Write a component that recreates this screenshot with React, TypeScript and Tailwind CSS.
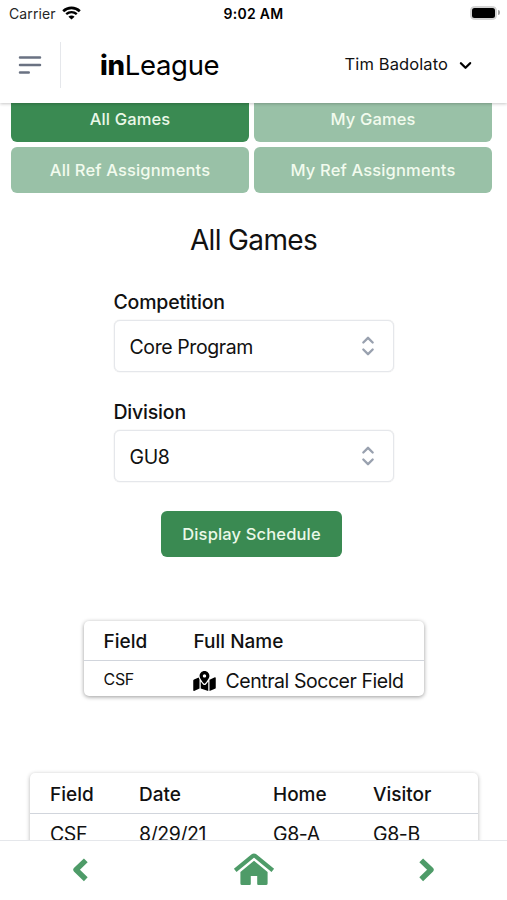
import { useState } from 'react'
import { FaMapMarkedAlt } from 'react-icons/fa'
import { HiChevronDown, HiOutlineMenuAlt2, HiOutlineSelector } from 'react-icons/hi'

const tabs = ['All Games', 'My Games', 'All Ref Assignments', 'My Ref Assignments']

function StatusBar() {
  return (
    <div className="grid h-[27px] grid-cols-3 items-center pl-[9px] pr-[7px] text-black">
      <div className="flex items-center gap-[6px] text-[14px] leading-none tracking-[0.1px] text-neutral-800">
        Carrier
        <svg className="-mt-[2px]" width="19" height="14" viewBox="0 0 19 14" fill="none">
          <path d="M1.2 5.2C5.9.8 13.1.8 17.8 5.2" stroke="#000" strokeWidth="2.7" />
          <path d="M4.2 8.2C7.3 5.5 11.7 5.5 14.8 8.2" stroke="#000" strokeWidth="2.4" />
          <path d="M9.5 13.6 6.4 10.7C8.2 9.2 10.8 9.2 12.6 10.7Z" fill="#000" />
        </svg>
      </div>
      <div className="-ml-[2px] text-center text-[14px] font-semibold leading-none tracking-[0.3px] whitespace-nowrap">9:02 AM</div>
      <div className="-mt-[2px] flex items-center justify-end gap-px">
        <div className="h-[14px] w-[27px] rounded-[4.5px] border border-neutral-300 bg-neutral-300 p-px">
          <div className="h-full w-full rounded-[2.5px] bg-black" />
        </div>
        <div className="h-[5px] w-[2px] rounded-r-full bg-neutral-400" />
      </div>
    </div>
  )
}

function Select({ label, value }: { label: string; value: string }) {
  return (
    <div className="w-[280px]">
      <div className="pt-px text-[19.5px] font-medium leading-6 tracking-[-0.2px]">{label}</div>
      <button className="mt-[6px] flex h-[52px] w-full items-center justify-between rounded-md border-[1.5px] border-gray-200 pl-[15px] pr-[11px] text-[19.5px] tracking-[-0.4px] shadow-[0_0_1px_rgba(0,0,0,0.25)]">
        <span className="pt-[3px]">{value}</span>
        <HiOutlineSelector className="h-[28px] w-[28px] text-gray-400" />
      </button>
    </div>
  )
}

function HomeIcon() {
  return (
    <svg width="42" height="34" viewBox="0 0 42 34" fill="currentColor">
      <path d="M2.2 18.4 19.6 4.2Q21 3.1 22.4 4.2L39.8 18.4" fill="none" stroke="currentColor" strokeWidth="4.1" strokeLinejoin="round" />
      <path d="M21 8.7 34.6 19.9V31.4Q34.6 33 33 33H25.3Q24.2 33 24.2 31.9V24H17.8V31.9Q17.8 33 16.7 33H9Q7.4 33 7.4 31.4V19.9Z" />
    </svg>
  )
}

export default function App() {
  const [activeTab, setActiveTab] = useState('All Games')

  return (
    <div className="flex h-[900px] w-[507px] flex-col overflow-hidden bg-white font-['Inter',sans-serif] text-[#111]">
      {/* Header */}
      <header className="relative z-10 h-[103px] shrink-0 bg-white shadow-[0_1px_3px_rgba(0,0,0,0.22)]">
        <StatusBar />
        <div className="flex h-[76px] items-center">
          <button className="flex h-[46px] w-[61px] items-center border-r border-gray-200 pl-[15px]">
            <HiOutlineMenuAlt2 className="h-[30px] w-[30px] text-gray-500" />
          </button>
          <div className="ml-[39px] pt-[2px] text-[27.5px] leading-none tracking-[-0.3px] text-black">
            <span className="font-extrabold">in</span>League
          </div>
          <button className="ml-auto mr-[30px] flex items-center gap-[6px] text-[16.5px] tracking-[0.1px]">
            <span className="-mt-[2px]">Tim Badolato</span>
            <HiChevronDown className="h-[23px] w-[23px] text-black" />
          </button>
        </div>
      </header>

      {/* Content */}
      <main className="min-h-0 flex-1 overflow-hidden">
        <div className="-mt-[7px] grid grid-cols-2 gap-[5px] pl-[11px] pr-[15px]">
          {tabs.map((tab) => (
            <button
              key={tab}
              onClick={() => setActiveTab(tab)}
              className={`h-[46px] rounded-md text-[16.5px] font-medium tracking-[0.15px] ${
                activeTab === tab ? 'bg-[#3a8a52] text-[#eaf8e8]' : 'bg-[#99c1a7] text-[#f2fbee]'
              }`}
            >
              {tab}
            </button>
          ))}
        </div>

        <div className="flex flex-col items-center">
          <h1 className="mt-[31px] text-[28px] leading-8 tracking-[-0.65px]">All Games</h1>
          <div className="mt-[33px]">
            <Select label="Competition" value="Core Program" />
          </div>
          <div className="mt-[27px]">
            <Select label="Division" value="GU8" />
          </div>
          <button className="mr-[4px] mt-[29px] h-[46px] w-[181px] rounded-md bg-[#3a8a52] text-[16.5px] font-medium tracking-[0.15px] text-[#eaf8e8]">
            Display Schedule
          </button>
        </div>

        {/* Field list */}
        <div className="mx-auto mt-[64px] h-[75px] w-[340px] overflow-hidden rounded-[5px] shadow-[0_1px_4px_rgba(0,0,0,0.4)]">
          <div className="flex h-[40px] items-center border-b border-gray-300 pl-[20px] pt-[3px] text-[19px] font-medium">
            <span className="w-[90px]">Field</span>
            <span>Full Name</span>
          </div>
          <div className="flex h-[35px] pl-[20px]">
            <span className="w-[89px] pt-[6px] text-[16px] leading-6 tracking-[-0.3px]">CSF</span>
            <span className="flex items-center gap-[10px] pt-[7px] text-[19.5px] tracking-[-0.45px]">
              <FaMapMarkedAlt className="-mt-[2px] h-[20px] w-[23px] text-black" />
              Central Soccer Field
            </span>
          </div>
        </div>

        {/* Games list */}
        <div className="ml-[30px] mt-[77px] h-[120px] w-[448px] rounded-[5px] shadow-[0_1px_4px_rgba(0,0,0,0.3)]">
          <div className="grid h-[41px] grid-cols-[89px_134px_100px_1fr] items-center border-b border-gray-300 pl-[20px] pt-[4px] text-[19px] font-medium">
            <span>Field</span>
            <span>Date</span>
            <span>Home</span>
            <span>Visitor</span>
          </div>
          <div className="grid h-[40px] grid-cols-[89px_134px_100px_1fr] items-center pl-[20px] pt-[2px] text-[19.5px] tracking-[-0.4px]">
            <span>CSF</span>
            <span>8/29/21</span>
            <span>G8-A</span>
            <span>G8-B</span>
          </div>
        </div>
      </main>

      {/* Bottom navigation */}
      <nav className="relative z-10 flex h-[60px] shrink-0 justify-between border-t border-gray-200 bg-white pl-[72px] pr-[72px] pt-[11px] text-[#4e9b68]">
        <svg className="mt-[6px]" width="16" height="24" viewBox="0 0 16 24" fill="none">
          <path d="M13.8 2.4 4 11.8 13.8 21.2" stroke="currentColor" strokeWidth="5.4" strokeLinejoin="round" />
        </svg>
        <HomeIcon />
        <svg className="mt-[6px]" width="16" height="24" viewBox="0 0 16 24" fill="none">
          <path d="M2.2 2.4 12 11.8 2.2 21.2" stroke="currentColor" strokeWidth="5.4" strokeLinejoin="round" />
        </svg>
      </nav>
    </div>
  )
}
